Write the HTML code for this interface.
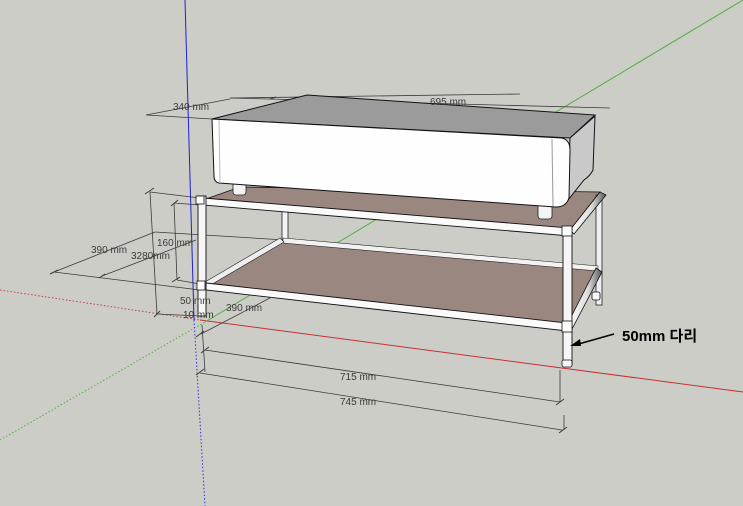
<!DOCTYPE html>
<html><head><meta charset="utf-8"><style>
html,body{margin:0;padding:0;background:#cdcdc8;}
svg{display:block}
text{font-family:"Liberation Sans","Noto Sans CJK KR",sans-serif;font-size:10px;fill:#3a3a3a}
</style></head><body>
<svg width="743" height="506" viewBox="0 0 743 506" xmlns="http://www.w3.org/2000/svg">
<defs>
<linearGradient id="tg" x1="0" y1="0" x2="1" y2="0"><stop offset="0" stop-color="#fff"/><stop offset="0.6" stop-color="#ddd"/><stop offset="1" stop-color="#555"/></linearGradient>
</defs>
<rect width="743" height="506" fill="#cdcdc8"/>
<!-- axes -->
<line x1="0" y1="290" x2="200" y2="320" stroke="#c04040" stroke-width="1" stroke-dasharray="1.5,2"/>
<line x1="200" y1="320" x2="743" y2="392" stroke="#c83030" stroke-width="1"/>
<line x1="0" y1="440" x2="205" y2="322" stroke="#50b040" stroke-width="1" stroke-dasharray="1.5,2"/>
<line x1="205" y1="322" x2="743" y2="0" stroke="#50b040" stroke-width="1"/>
<line x1="185" y1="0" x2="194" y2="320" stroke="#2020d0" stroke-width="1"/>
<line x1="194" y1="320" x2="205" y2="506" stroke="#3030d0" stroke-width="1" stroke-dasharray="1.5,2"/>

<!-- dimension lines -->
<g stroke="#3a3a3a" stroke-width="0.8" fill="none">
<line x1="146" y1="115" x2="230" y2="99"/><line x1="146" y1="115" x2="212" y2="119"/>
<line x1="230" y1="98" x2="520" y2="94"/>
<line x1="230" y1="98" x2="610" y2="108"/>
<line x1="150" y1="192" x2="200" y2="198"/><line x1="150" y1="192" x2="157" y2="314"/>
<line x1="174" y1="203" x2="200" y2="205"/><line x1="174" y1="203" x2="177" y2="280"/>
<line x1="177" y1="280" x2="200" y2="284"/>
<line x1="157" y1="314" x2="200" y2="316"/>
<line x1="54" y1="272" x2="155" y2="232"/><line x1="54" y1="272" x2="200" y2="290"/>
<line x1="102" y1="276" x2="196" y2="240"/>
<line x1="155" y1="232" x2="285" y2="240"/>
<line x1="201" y1="334" x2="270" y2="298"/>
<line x1="205" y1="350" x2="560" y2="402"/>
<line x1="200" y1="373" x2="562" y2="430"/>
<line x1="202" y1="325" x2="205" y2="372"/>
<line x1="560" y1="370" x2="560" y2="402"/>
<line x1="564" y1="415" x2="564" y2="430"/>
</g>
<g stroke="#3a3a3a" stroke-width="1">
<line x1="145" y1="194" x2="154" y2="188"/><line x1="171" y1="206" x2="178" y2="200"/>
<line x1="172" y1="282" x2="180" y2="277"/><line x1="154" y1="317" x2="160" y2="311"/>
<line x1="50" y1="274" x2="58" y2="270"/><line x1="99" y1="278" x2="105" y2="274"/>
<line x1="196" y1="337" x2="204" y2="331"/><line x1="201" y1="353" x2="209" y2="347"/>
<line x1="196" y1="375" x2="204" y2="369"/><line x1="556" y1="405" x2="564" y2="399"/>
<line x1="559" y1="433" x2="567" y2="427"/><line x1="270" y1="99" x2="276" y2="97"/>
</g>
<!-- top shelf -->
<polygon points="203,200 240,187 600,192 570,230" fill="#9a8780" stroke="#111" stroke-width="0.8"/>
<!-- back posts -->
<rect x="282" y="211" width="6" height="30" fill="#f4f4f4" stroke="#222" stroke-width="0.8"/>
<rect x="596" y="195" width="6" height="110" fill="#efefef" stroke="#222" stroke-width="0.8"/>
<!-- feet of box -->
<rect x="233" y="180" width="13" height="15" rx="3" fill="#f4f4f4" stroke="#222" stroke-width="0.8"/>
<rect x="538" y="200" width="14" height="19" rx="3" fill="#f4f4f4" stroke="#222" stroke-width="0.8"/>
<!-- box -->
<polygon points="212,119 307,95 595,115 570,138" fill="#9b9b9b" stroke="#111" stroke-width="1"/>
<path d="M570,138 Q586,124 595,116 L593,170 Q590,176 584,180 L568,200 Z" fill="#c9c9c9" stroke="#111" stroke-width="1"/>
<path d="M212,119 L562,138 Q570,140 570,150 L569,198 Q566,207 556,207 L219,183 Q214,182 214,176 Z" fill="#fefefe" stroke="#111" stroke-width="1"/>
<line x1="552" y1="139" x2="553" y2="206" stroke="#999" stroke-width="1"/>
<line x1="219" y1="120" x2="220" y2="182" stroke="#bbb" stroke-width="1"/>
<!-- lower shelf -->
<polygon points="207,283 283,240 598,270 567,325" fill="#9a8780" stroke="#111" stroke-width="0.8"/>
<polygon points="283,238 598,266 598,271 283,243" fill="#f2f2f2" stroke="#222" stroke-width="0.6"/>
<!-- right side tubes -->
<polygon points="570,230 600,192 606,195 574,234" fill="url(#tg)" stroke="#111" stroke-width="0.8"/>
<polygon points="567,325 596,268 602,272 572,329" fill="url(#tg)" stroke="#111" stroke-width="0.8"/>
<polygon points="205,282 280,238 284,242 209,286" fill="#eee" stroke="#222" stroke-width="0.6"/>
<!-- front tubes -->
<polygon points="203,198 570,228 570,236 203,205" fill="#fafafa" stroke="#111" stroke-width="0.9"/>
<polygon points="206,283 567,323 567,331 206,290" fill="#fafafa" stroke="#111" stroke-width="0.9"/>
<!-- front posts -->
<rect x="198" y="196" width="8" height="120" fill="#f6f6f6" stroke="#111" stroke-width="0.9"/>
<rect x="196" y="196" width="8" height="8" fill="#fff" stroke="#111" stroke-width="0.8"/>
<rect x="197" y="281" width="8" height="9" fill="#fff" stroke="#111" stroke-width="0.8"/>
<rect x="563" y="227" width="9" height="138" fill="#f6f6f6" stroke="#111" stroke-width="0.9"/>
<rect x="562" y="226" width="10" height="10" fill="#fff" stroke="#111" stroke-width="0.8"/>
<rect x="562" y="321" width="10" height="11" fill="#fff" stroke="#111" stroke-width="0.8"/>
<rect x="562" y="360" width="10" height="7" rx="2" fill="#f6f6f6" stroke="#111" stroke-width="0.8"/>
<rect x="592" y="292" width="8" height="8" rx="2" fill="#f6f6f6" stroke="#111" stroke-width="0.8"/>
<!-- labels -->
<text x="173" y="110">340 mm</text>
<text x="430" y="105">695 mm</text>
<text x="157" y="246">160 mm</text>
<text x="91" y="253">390 mm</text>
<text x="131" y="259">3280mm</text>
<text x="180" y="304">50 mm</text>
<text x="183" y="318">10 mm</text>
<text x="226" y="311">390 mm</text>
<text x="340" y="380">715 mm</text>
<text x="340" y="405">745 mm</text>
<line x1="614" y1="334" x2="575" y2="345" stroke="#000" stroke-width="1.5"/>
<polygon points="570,346 580,339 581,346" fill="#000"/>
<text x="622" y="341" style="font-size:15px;font-weight:bold;fill:#000">50mm 다리</text>
</svg>
</body></html>
